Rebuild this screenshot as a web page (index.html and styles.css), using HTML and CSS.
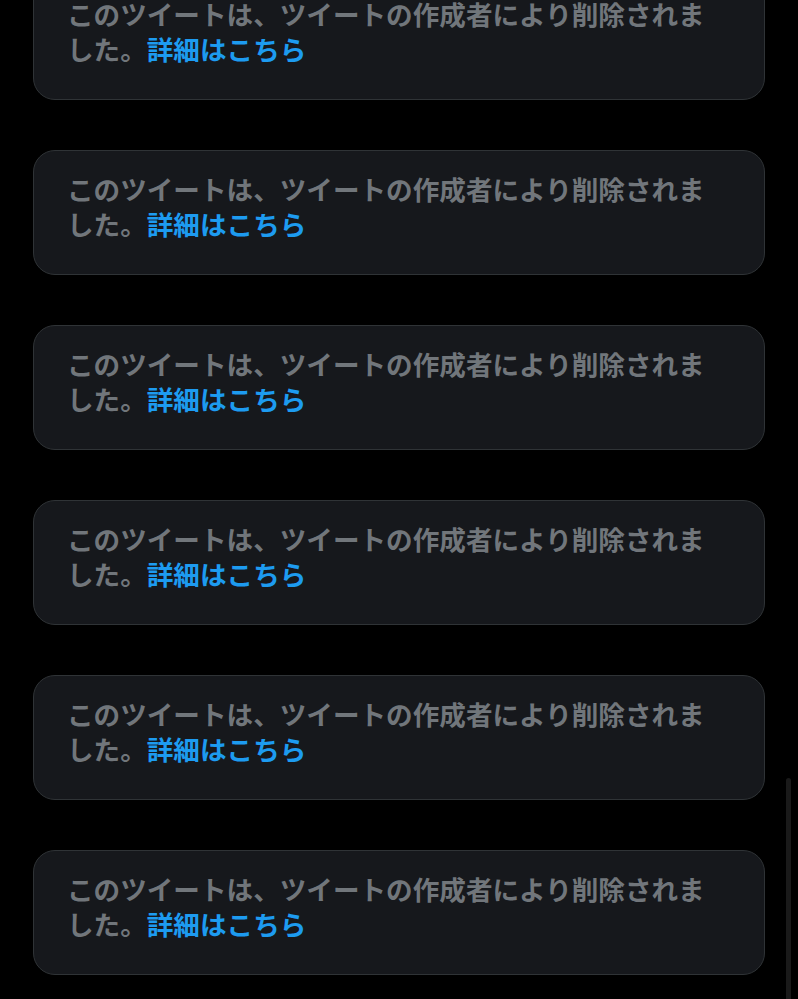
FILE: index.html
```html
<!DOCTYPE html>
<html lang="ja">
<head>
    <meta charset="UTF-8">
    <meta name="viewport" content="width=device-width, initial-scale=1.0">
    <title>削除されたツイート</title>
    <link rel="stylesheet" href="styles.css">
</head>
<body>
    <div class="timeline">
        <div class="tombstone">このツイートは、ツイートの作成者により削除されました。<a href="#" class="more">詳細はこちら</a></div>
        <div class="tombstone">このツイートは、ツイートの作成者により削除されました。<a href="#" class="more">詳細はこちら</a></div>
        <div class="tombstone">このツイートは、ツイートの作成者により削除されました。<a href="#" class="more">詳細はこちら</a></div>
        <div class="tombstone">このツイートは、ツイートの作成者により削除されました。<a href="#" class="more">詳細はこちら</a></div>
        <div class="tombstone">このツイートは、ツイートの作成者により削除されました。<a href="#" class="more">詳細はこちら</a></div>
        <div class="tombstone">このツイートは、ツイートの作成者により削除されました。<a href="#" class="more">詳細はこちら</a></div>
    </div>
    <div class="scroll-thumb"></div>
</body>
</html>
```

FILE: styles.css
```css
html, body {
    background-color: #000;
}
body {
    margin: 0;
    font-family: "Noto Sans CJK JP", "Noto Sans", sans-serif;
    overflow: hidden;
    height: 999px;
}
.timeline {
    display: flex;
    flex-direction: column;
    gap: 50px;
    margin-top: -25px;
    padding: 0 33px;
}
.tombstone {
    background-color: #16181c;
    border: 1px solid #2f3336;
    border-radius: 22px;
    padding: 20px 35px 33px 33px;
    font-size: 26.6px;
    line-height: 35px;
    font-weight: 600;
    color: #71767b;
}
.more {
    color: #1d9bf0;
    text-decoration: none;
    font-weight: 700;
}
.scroll-thumb {
    position: absolute;
    right: 7px;
    top: 778px;
    width: 5px;
    height: 240px;
    border-radius: 3px;
    background-color: #1a1a1a;
}
```
